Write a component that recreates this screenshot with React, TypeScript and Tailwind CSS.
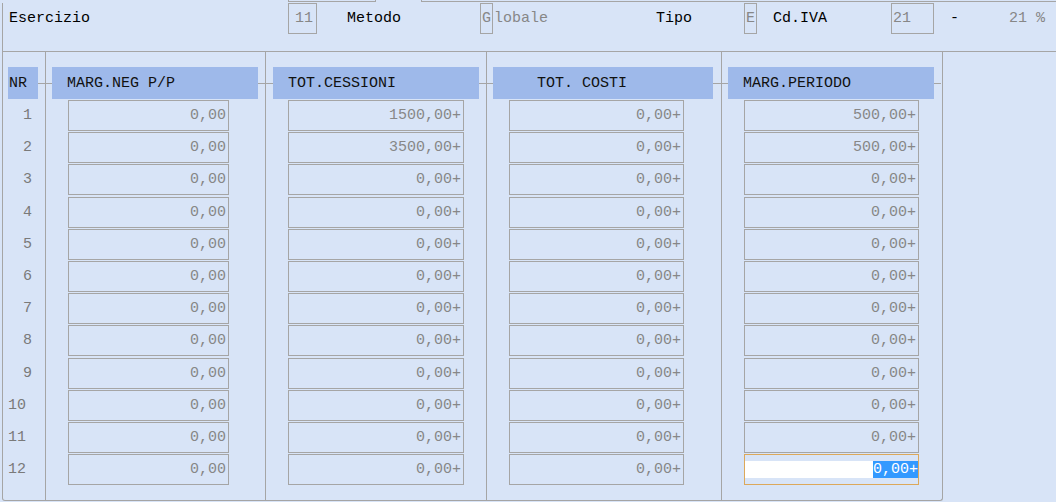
import React from 'react'

const rows = [
  { nr: 1, neg: '0,00', cess: '1500,00+', costi: '0,00+', marg: '500,00+' },
  { nr: 2, neg: '0,00', cess: '3500,00+', costi: '0,00+', marg: '500,00+' },
  { nr: 3, neg: '0,00', cess: '0,00+', costi: '0,00+', marg: '0,00+' },
  { nr: 4, neg: '0,00', cess: '0,00+', costi: '0,00+', marg: '0,00+' },
  { nr: 5, neg: '0,00', cess: '0,00+', costi: '0,00+', marg: '0,00+' },
  { nr: 6, neg: '0,00', cess: '0,00+', costi: '0,00+', marg: '0,00+' },
  { nr: 7, neg: '0,00', cess: '0,00+', costi: '0,00+', marg: '0,00+' },
  { nr: 8, neg: '0,00', cess: '0,00+', costi: '0,00+', marg: '0,00+' },
  { nr: 9, neg: '0,00', cess: '0,00+', costi: '0,00+', marg: '0,00+' },
  { nr: 10, neg: '0,00', cess: '0,00+', costi: '0,00+', marg: '0,00+' },
  { nr: 11, neg: '0,00', cess: '0,00+', costi: '0,00+', marg: '0,00+' },
  { nr: 12, neg: '0,00', cess: '0,00+', costi: '0,00+', marg: '0,00+' },
]

function Tick({ w }: { w: string }) {
  return <div className={`h-px bg-[#a5a5a5] ${w}`} />
}

function Cell({ value, width }: { value: string; width: string }) {
  return (
    <div className={`h-[31px] ${width} border border-[#a5a5a5] flex items-center justify-end pr-[2px] text-[#878787]`}>
      {value}
    </div>
  )
}

function Column({
  title,
  titlePad,
  leftTick,
  rightTick,
  headWidth,
  cellWidth,
  values,
  border,
  activeLast,
}: {
  title: string
  titlePad: string
  leftTick: string
  rightTick: string
  headWidth: string
  cellWidth: string
  values: string[]
  border: boolean
  activeLast?: boolean
}) {
  return (
    <div className={`flex flex-col h-full ${border ? 'border-r border-[#a5a5a5]' : ''}`}>
      <div className="flex items-center mt-[15px]">
        <Tick w={leftTick} />
        <div className={`h-[32px] ${headWidth} bg-[#9eb9ea] flex items-center ${titlePad} text-[#111]`}>{title}</div>
        <Tick w={rightTick} />
      </div>
      <div className="flex flex-col gap-[1.2px] mt-[1px] ml-[22px]">
        {values.map((v, i) =>
          activeLast && i === values.length - 1 ? (
            <div
              key={i}
              className={`h-[31px] ${cellWidth} border border-[#dca85a] flex items-center`}
            >
              <div className="h-[17px] flex-1 bg-white" />
              <div className="h-[17px] bg-[#3399ff] text-white flex items-center">{v}</div>
            </div>
          ) : (
            <Cell key={i} value={v} width={cellWidth} />
          )
        )}
      </div>
    </div>
  )
}

export default function App() {
  return (
    <div
      className="w-[1056px] h-[502px] overflow-hidden bg-[#d8e4f7] text-[15px] leading-none"
      style={{ fontFamily: '"Liberation Mono", "Courier New", monospace' }}
    >
      {/* top strip: bottoms of the fields above */}
      <div className="flex h-[2px]">
        <div className="ml-[288px] w-[88px] border-x border-b border-[#a5a5a5]" />
        <div className="ml-[45px] flex-1 border-l border-b border-[#a5a5a5]" />
      </div>

      {/* header fields */}
      <div className="ml-[2px] h-[49px] border-l border-b border-[#a5a5a5]">
        <div className="flex items-center h-[31px] mt-[1px]">
          <div className="w-[285px] pl-[6px] text-black">Esercizio</div>
          <div className="w-[29px] h-[31px] border border-[#a5a5a5] flex items-center justify-end pr-[3px] text-[#878787]">11</div>
          <div className="w-[163px] pl-[30px] text-black">Metodo</div>
          <div className="w-[13px] h-[31px] border border-[#a5a5a5] flex items-center justify-center text-[#878787]">G</div>
          <div className="w-[163px] pl-[1px] text-[#878787]">lobale</div>
          <div className="w-[88px] text-black">Tipo</div>
          <div className="w-[13px] h-[31px] border border-[#a5a5a5] flex items-center justify-center text-[#878787]">E</div>
          <div className="w-[134px] pl-[16px] text-black">Cd.IVA</div>
          <div className="w-[43px] h-[31px] border border-[#a5a5a5] flex items-center pl-px text-[#878787]">21</div>
          <div className="w-[75px] pl-[16px] text-black">-</div>
          <div className="text-[#878787] whitespace-pre">21 %</div>
        </div>
      </div>

      {/* table panel */}
      <div className="ml-[2px] w-[941px] h-[449px] border-x border-b border-[#a5a5a5] rounded-b-[3px] flex">
        {/* NR column */}
        <div className="w-[43px] h-full border-r border-[#a5a5a5] flex flex-col">
          <div className="flex items-center mt-[15px] ml-[5px]">
            <div className="h-[32px] w-[30px] bg-[#9eb9ea] flex items-center pl-px text-[#111]">NR</div>
            <Tick w="flex-1" />
          </div>
          <div className="flex flex-col gap-[1.2px] mt-[1px]">
            {rows.map((r) => (
              <div
                key={r.nr}
                className={`h-[31px] flex items-center text-[#7a7a7a] ${r.nr < 10 ? 'pl-[20px]' : 'pl-[5px]'}`}
              >
                {r.nr}
              </div>
            ))}
          </div>
        </div>

        <div className="w-[220px]">
          <Column
            title="MARG.NEG P/P"
            titlePad="pl-[15px]"
            leftTick="w-[6px]"
            rightTick="w-[7px]"
            headWidth="w-[206px]"
            cellWidth="w-[161px]"
            values={rows.map((r) => r.neg)}
            border
          />
        </div>
        <div className="w-[221px]">
          <Column
            title="TOT.CESSIONI"
            titlePad="pl-[15px]"
            leftTick="w-[7px]"
            rightTick="w-[7px]"
            headWidth="w-[206px]"
            cellWidth="w-[176px]"
            values={rows.map((r) => r.cess)}
            border
          />
        </div>
        <div className="w-[235px]">
          <Column
            title="TOT. COSTI"
            titlePad="pl-[44px]"
            leftTick="w-[6px]"
            rightTick="w-[8px]"
            headWidth="w-[220px]"
            cellWidth="w-[175px]"
            values={rows.map((r) => r.costi)}
            border
          />
        </div>
        <div className="w-[219px]">
          <Column
            title="MARG.PERIODO"
            titlePad="pl-[15px]"
            leftTick="w-[6px]"
            rightTick="w-[7px]"
            headWidth="w-[206px]"
            cellWidth="w-[175px]"
            values={rows.map((r) => r.marg)}
            border={false}
            activeLast
          />
        </div>
      </div>
    </div>
  )
}
